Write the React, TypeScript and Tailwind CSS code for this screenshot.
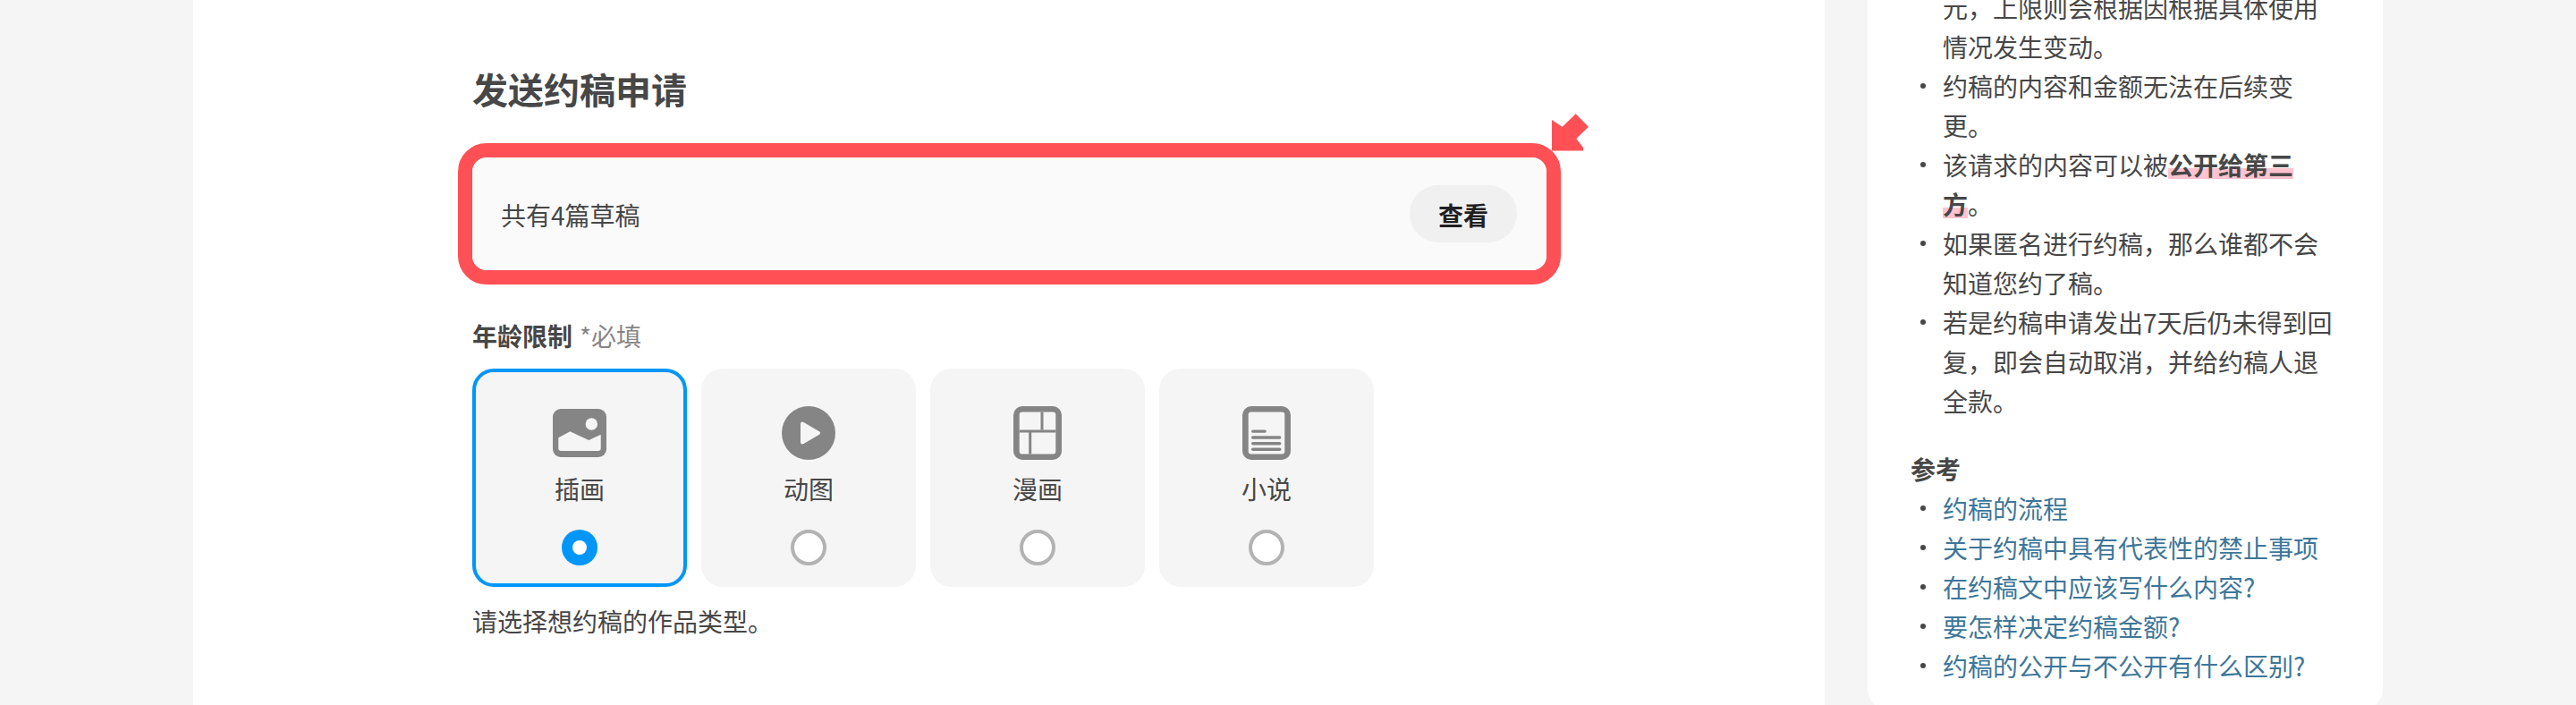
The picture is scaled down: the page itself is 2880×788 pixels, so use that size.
const CJK = "font-['Noto_Sans_CJK_SC',sans-serif]";

const GuideItems = [
  "约稿的内容和金额无法在后续变更。",
  <>
    该请求的内容可以被
    <strong className="font-bold bg-[linear-gradient(transparent_59%,#ffc2ce_59%,#ffc2ce_90%,transparent_90%)]">公开给第三方</strong>。
  </>,
  "如果匿名进行约稿，那么谁都不会知道您约了稿。",
  "若是约稿申请发出7天后仍未得到回复，即会自动取消，并给约稿人退全款。",
];

const RefLinks = [
  "约稿的流程",
  "关于约稿中具有代表性的禁止事项",
  "在约稿文中应该写什么内容?",
  "要怎样决定约稿金额?",
  "约稿的公开与不公开有什么区别?",
];

function IllustIcon() {
  return (
    <svg width="60" height="54" viewBox="0 0 60 54" className="mt-[3px] mb-[3px]">
      <rect width="60" height="54" rx="9" fill="#858585" />
      <circle cx="43.3" cy="17" r="6.7" fill="#f5f5f5" />
      <path d="M6.3 32.3 19.3 25.3 40.3 35 53.7 28.7V44a3 3 0 0 1-3 3H9.3a3 3 0 0 1-3-3Z" fill="#f5f5f5" />
    </svg>
  );
}

function PlayIcon() {
  return (
    <svg width="60" height="60" viewBox="0 0 60 60">
      <circle cx="30" cy="30" r="30" fill="#858585" />
      <path d="M23 19.5 41 30 23 40.5Z" fill="#f5f5f5" stroke="#f5f5f5" strokeWidth="4" strokeLinejoin="round" />
    </svg>
  );
}

function ComicIcon() {
  return (
    <svg width="54" height="60" viewBox="0 0 54 60">
      <rect width="54" height="60" rx="10" fill="#858585" />
      <rect x="6.7" y="6.5" width="40.6" height="47" rx="3" fill="#f5f5f5" />
      <rect x="6.7" y="26.5" width="40.6" height="3" fill="#858585" />
      <rect x="30.5" y="6.5" width="3" height="20" fill="#858585" />
      <rect x="17.2" y="29" width="3" height="24.5" fill="#858585" />
    </svg>
  );
}

function NovelIcon() {
  return (
    <svg width="54" height="60" viewBox="0 0 54 60">
      <rect width="54" height="60" rx="10" fill="#858585" />
      <rect x="6.7" y="6.5" width="40.6" height="47" rx="3" fill="#f5f5f5" />
      <rect x="10" y="26.4" width="16.8" height="3.4" rx="1.7" fill="#858585" />
      <rect x="10" y="33.3" width="33.4" height="3.4" rx="1.7" fill="#858585" />
      <rect x="10" y="40" width="33.4" height="3.4" rx="1.7" fill="#858585" />
      <rect x="10" y="46.6" width="33.4" height="3.4" rx="1.7" fill="#858585" />
    </svg>
  );
}

const WorkTypes = [
  { label: "插画", icon: IllustIcon, selected: true },
  { label: "动图", icon: PlayIcon, selected: false },
  { label: "漫画", icon: ComicIcon, selected: false },
  { label: "小说", icon: NovelIcon, selected: false },
];

function Dot() {
  return (
    <span className="shrink-0 w-[36px] h-[44px] flex items-center pl-[11px]">
      <span className="w-[6px] h-[6px] rounded-full bg-[#474747]" />
    </span>
  );
}

export default function App() {
  return (
    <div className={`${CJK} h-[788px] overflow-hidden bg-[#f5f5f5] text-[#474747] text-[28px] flex items-start justify-center gap-[48px]`}>
      <main className="w-[1824px] h-[788px] bg-white pl-[312px]">
        <h2 className="mt-[76px] w-fit text-[40px] leading-[46px] font-bold">发送约稿申请</h2>

        <div className="relative mt-[38px] -ml-[16px] w-[1233px] h-[158px] border-[16px] border-[#ff5056] rounded-[32px]">
          <div className="h-full bg-[#fafafa] rounded-[16px] pl-[32px] pr-[33px] flex items-center justify-between">
            <span className="relative top-[1px]">共有4篇草稿</span>
            <button className="w-[120px] h-[64px] rounded-full bg-[#f0f0f0] text-[#1f1f1f] font-bold pt-[2px]">查看</button>
          </div>
          <svg width="42" height="42" viewBox="0 0 42 42" className="absolute right-[-48px] top-[-49px]">
            <path d="M0 41.5V7L11.7 14.7 26.7.3 41 14.7 27.3 28 35 38V41.5Z" fill="#ff5056" />
          </svg>
        </div>

        <div className="mt-[35px] leading-[44px]">
          <span className="font-bold">年龄限制</span>
          <span className="ml-[8px] text-[#858585]">*必填</span>
        </div>

        <div className="mt-[15px] flex gap-[16px]">
          {WorkTypes.map(({ label, icon: Icon, selected }) => (
            <label
              key={label}
              className={`w-[240px] h-[244px] box-border border-[4px] rounded-[24px] bg-[#f5f5f5] pt-[38px] flex flex-col items-center ${
                selected ? "border-[#0096fa]" : "border-transparent"
              }`}
            >
              <Icon />
              <span className="mt-[14px] mb-[2px] leading-[36px]">{label}</span>
              {selected ? (
                <span className="mt-[26px] w-[40px] h-[40px] rounded-full bg-[#0096fa] flex items-center justify-center">
                  <span className="w-[16px] h-[16px] rounded-full bg-white" />
                </span>
              ) : (
                <span className="mt-[26px] w-[40px] h-[40px] rounded-full bg-white border-[4px] border-[#b3b3b3]" />
              )}
            </label>
          ))}
        </div>

        <p className="mt-[16px] leading-[44px]">请选择想约稿的作品类型。</p>
      </main>

      <aside className="w-[576px] h-[794px] bg-white rounded-b-[24px] px-[48px] leading-[44px]">
        <ul className="-mt-[14px]">
          <li className="pl-[36px]">元，上限则会根据因根据具体使用情况发生变动。</li>
          {GuideItems.map((item, i) => (
            <li key={i} className="flex">
              <Dot />
              <span className="min-w-0 flex-1">{item}</span>
            </li>
          ))}
        </ul>
        <h3 className="mt-[32px] font-bold">参考</h3>
        <ul>
          {RefLinks.map((link) => (
            <li key={link} className="flex">
              <Dot />
              <a className="text-[#3d7699]">{link}</a>
            </li>
          ))}
        </ul>
      </aside>
    </div>
  );
}
